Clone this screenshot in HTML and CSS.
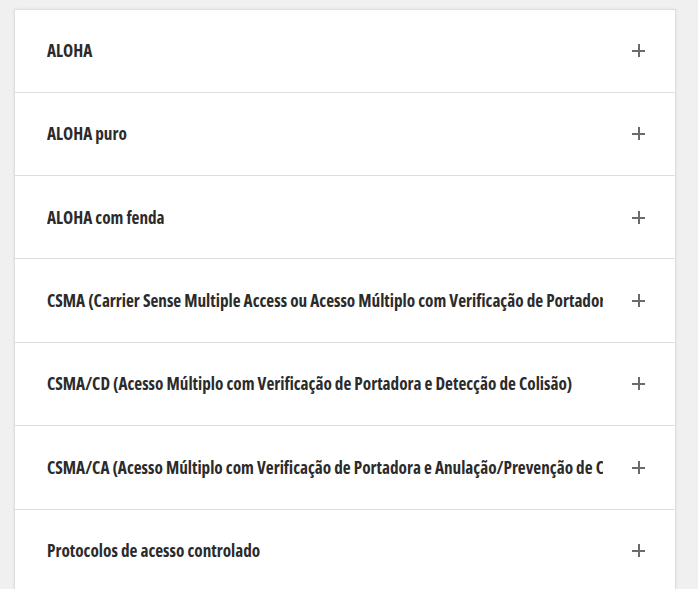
FILE: index.html
```html
<!DOCTYPE html>
<html lang="pt">
<head>
<meta charset="utf-8">
<title>Acordeão</title>
<link rel="stylesheet" href="styles.css">
</head>
<body>
<div class="accordion">
  <div class="item"><div class="title">ALOHA</div><span class="plus"></span></div>
  <div class="item"><div class="title">ALOHA puro</div><span class="plus"></span></div>
  <div class="item"><div class="title">ALOHA com fenda</div><span class="plus"></span></div>
  <div class="item"><div class="title">CSMA (Carrier Sense Multiple Access ou Acesso Múltiplo com Verificação de Portadora)</div><span class="plus"></span></div>
  <div class="item"><div class="title">CSMA/CD (Acesso Múltiplo com Verificação de Portadora e Detecção de Colisão)</div><span class="plus"></span></div>
  <div class="item"><div class="title">CSMA/CA (Acesso Múltiplo com Verificação de Portadora e Anulação/Prevenção de Colisão)</div><span class="plus"></span></div>
  <div class="item"><div class="title">Protocolos de acesso controlado</div><span class="plus"></span></div>
</div>
</body>
</html>
```
FILE: styles.css
```css
html, body {
  margin: 0;
  padding: 0;
}
body {
  background: #f0f0f0;
  font-family: "Open Sans", "Liberation Sans Narrow", sans-serif;
  padding: 9px 22px 0 14px;
  height: 589px;
  box-sizing: border-box;
  overflow: hidden;
}
.accordion {
  background: #fff;
  border: 1px solid #dedede;
  box-shadow: 0 0 3px rgba(0,0,0,0.07);
}
.item {
  display: flex;
  align-items: center;
  height: 82.4px;
  padding: 0 30px 0 32px;
  border-bottom: 1px solid #dedede;
  gap: 29px;
}
.item:first-child {
  height: 81.6px;
}
.title {
  flex: 1;
  min-width: 0;
  white-space: nowrap;
  overflow: hidden;
  font-size: 17.2px;
  font-weight: 700;
  font-stretch: 75%;
  color: #2b2b2b;
}
.plus {
  position: relative;
  width: 13px;
  height: 13px;
  flex: none;
}
.plus::before, .plus::after {
  content: "";
  position: absolute;
  background: #6b6b6b;
}
.plus::before {
  left: 0;
  right: 0;
  top: 6px;
  height: 2px;
}
.plus::after {
  top: 0;
  bottom: 0;
  left: 5.5px;
  width: 2px;
}
```
